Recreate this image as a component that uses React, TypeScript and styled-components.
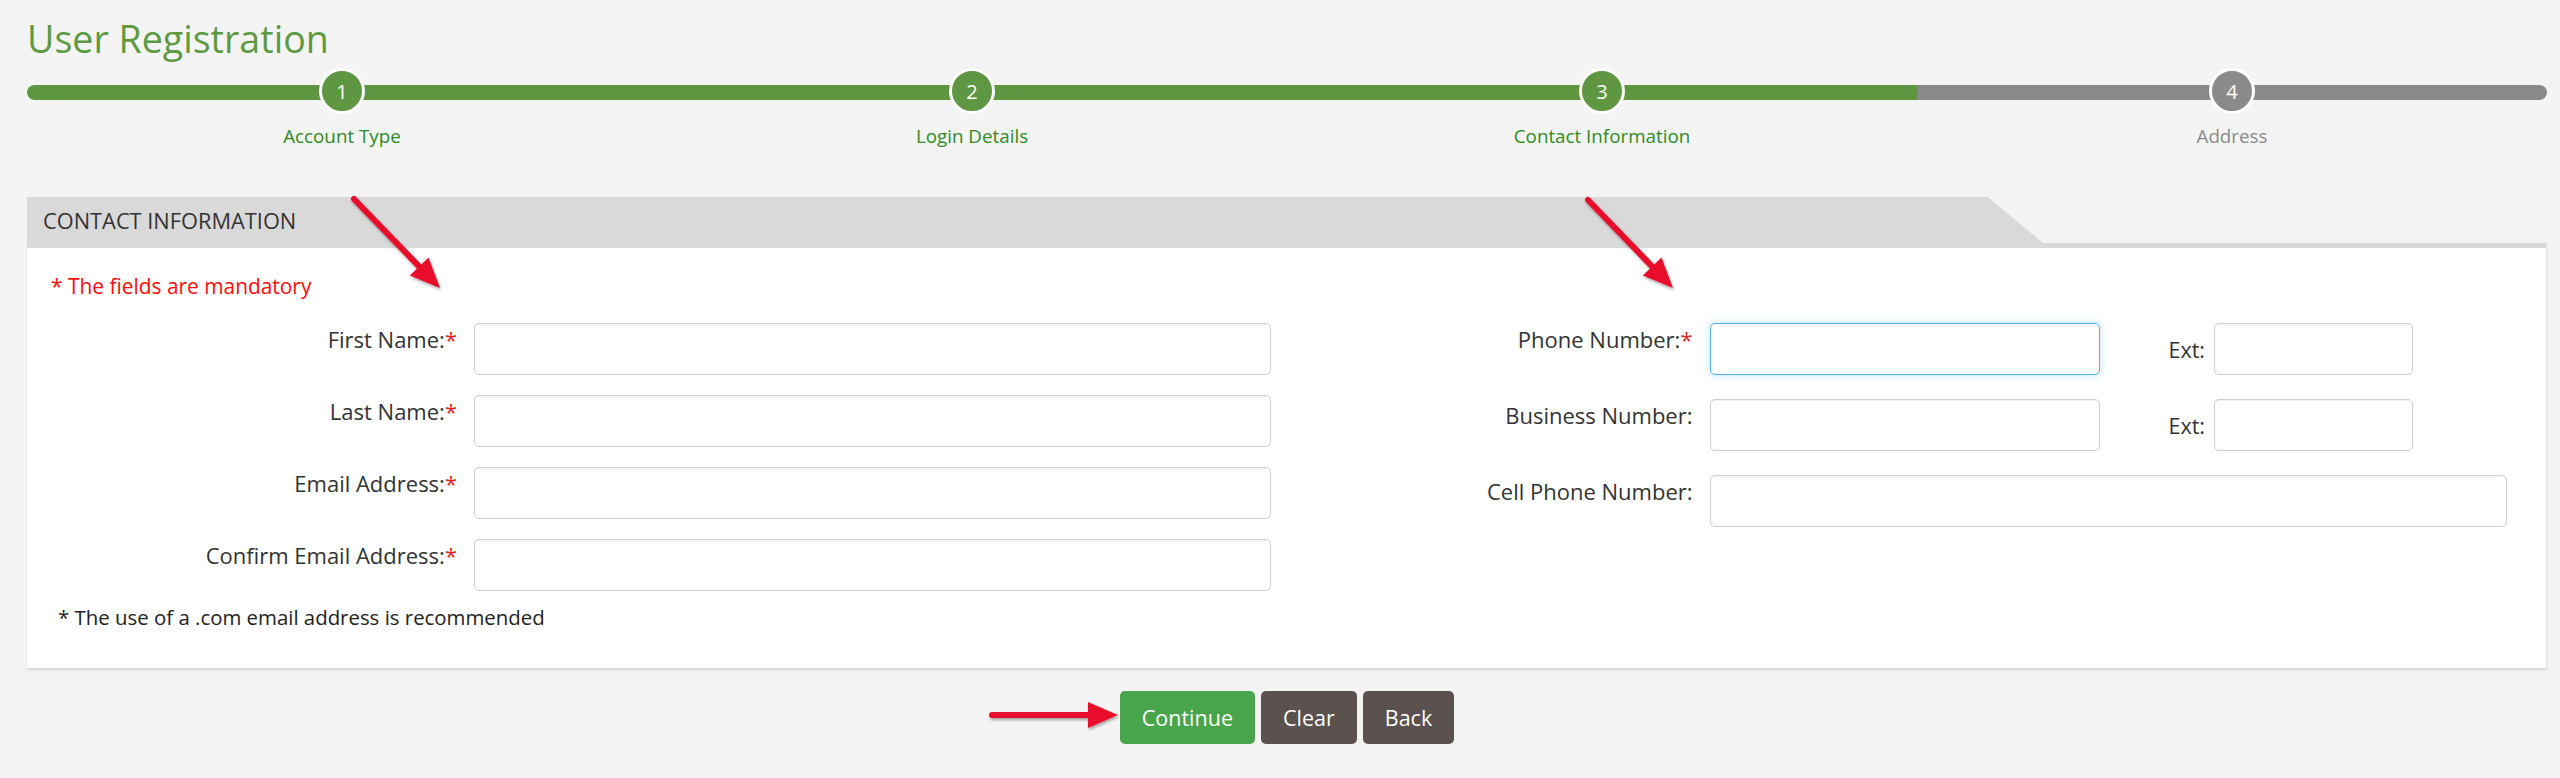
import styled, { createGlobalStyle } from 'styled-components';

const GlobalStyle = createGlobalStyle`
  body {
    margin: 0;
    background: #f4f4f4;
    font-family: 'Open Sans', 'Liberation Sans', sans-serif;
  }
`;

const steps = [
  { n: 1, label: 'Account Type', done: true },
  { n: 2, label: 'Login Details', done: true },
  { n: 3, label: 'Contact Information', done: true },
  { n: 4, label: 'Address', done: false },
];

type ArrowProps = { x1: number; y1: number; x2: number; y2: number };

const Arrow = ({ x1, y1, x2, y2 }: ArrowProps) => {
  const dx = x2 - x1;
  const dy = y2 - y1;
  const len = Math.hypot(dx, dy);
  const ux = dx / len;
  const uy = dy / len;
  const head = 30;
  const half = 13;
  const bx = x2 - ux * head;
  const by = y2 - uy * head;
  const pts = [
    `${x2},${y2}`,
    `${bx - uy * half},${by + ux * half}`,
    `${bx + uy * half},${by - ux * half}`,
  ].join(' ');
  return (
    <g>
      <line x1={x1} y1={y1} x2={bx + ux * 4} y2={by + uy * 4} stroke="#e8102c" strokeWidth="6" strokeLinecap="round" />
      <polygon points={pts} fill="#e8102c" />
    </g>
  );
};

export default function App() {
  return (
    <Page>
      <GlobalStyle />
      <Title>User Registration</Title>

      <Stepper>
        <Track>
          <Bar />
          <Circles>
            {steps.map((s) => (
              <Circle key={s.n} $done={s.done}>{s.n}</Circle>
            ))}
          </Circles>
        </Track>
        <Labels>
          {steps.map((s) => (
            <StepLabel key={s.n} $done={s.done}>{s.label}</StepLabel>
          ))}
        </Labels>
      </Stepper>

      <Panel>
        <Tab>CONTACT INFORMATION</Tab>
        <PanelBody>
          <Mandatory>* The fields are mandatory</Mandatory>
          <Columns>
            <Column $gap={20}>
              <Row>
                <Label>First Name:<Req>*</Req></Label>
                <Input $w={797} />
              </Row>
              <Row>
                <Label>Last Name:<Req>*</Req></Label>
                <Input $w={797} />
              </Row>
              <Row>
                <Label>Email Address:<Req>*</Req></Label>
                <Input $w={797} />
              </Row>
              <Row>
                <Label>Confirm Email Address:<Req>*</Req></Label>
                <Input $w={797} />
              </Row>
              <Note>* The use of a .com email address is recommended</Note>
            </Column>

            <Column $gap={24}>
              <Row>
                <Label>Phone Number:<Req>*</Req></Label>
                <Input $w={390} $focus />
                <ExtGroup>
                  <ExtLabel>Ext:</ExtLabel>
                  <Input $w={199} />
                </ExtGroup>
              </Row>
              <Row>
                <Label>Business Number:</Label>
                <Input $w={390} />
                <ExtGroup>
                  <ExtLabel>Ext:</ExtLabel>
                  <Input $w={199} />
                </ExtGroup>
              </Row>
              <Row>
                <Label>Cell Phone Number:</Label>
                <Input $w={797} />
              </Row>
            </Column>
          </Columns>
        </PanelBody>
      </Panel>

      <Actions>
        <Button $primary>Continue</Button>
        <Button>Clear</Button>
        <Button>Back</Button>
      </Actions>

      <Annotations width="2560" height="778" viewBox="0 0 2560 778">
        <defs>
          <filter id="shadow" x="-20%" y="-20%" width="140%" height="140%">
            <feDropShadow dx="1" dy="2" stdDeviation="1.5" floodColor="#000" floodOpacity="0.35" />
          </filter>
        </defs>
        <g filter="url(#shadow)">
          <Arrow x1={354} y1={199} x2={440} y2={288} />
          <Arrow x1={1588} y1={200} x2={1673} y2={288} />
          <Arrow x1={992} y1={715} x2={1118} y2={715} />
        </g>
      </Annotations>
    </Page>
  );
}

const Page = styled.div`
  position: relative;
  width: 2560px;
  min-height: 778px;
  box-sizing: border-box;
  padding: 0 13px 0 27px;
`;

const Title = styled.h1`
  margin: 0;
  padding-top: 13px;
  font-size: 37.6px;
  font-weight: 400;
  line-height: 52px;
  color: #5c9a43;
`;

const Stepper = styled.div`
  margin-top: 3px;
`;

const Track = styled.div`
  display: grid;
  align-items: center;
  height: 45px;

  & > * {
    grid-area: 1 / 1;
  }
`;

const Bar = styled.div`
  height: 15px;
  margin-top: 2px;
  border-radius: 8px;
  background: linear-gradient(to right, #5e9641 75%, #8a8a8a 75%);
`;

const Circles = styled.div`
  display: grid;
  grid-template-columns: repeat(4, 1fr);
  justify-items: center;
`;

const Circle = styled.div<{ $done: boolean }>`
  width: 46px;
  height: 46px;
  box-sizing: border-box;
  border: 3px solid #fff;
  border-radius: 50%;
  background: ${(p) => (p.$done ? '#5e9641' : '#8a8a8a')};
  color: #fff;
  font-size: 20px;
  display: flex;
  align-items: center;
  justify-content: center;
`;

const Labels = styled.div`
  display: grid;
  grid-template-columns: repeat(4, 1fr);
  margin-top: 11px;
`;

const StepLabel = styled.div<{ $done: boolean }>`
  text-align: center;
  font-size: 18.8px;
  line-height: 25px;
  color: ${(p) => (p.$done ? '#2f8a1f' : '#8a8a8a')};
`;

const Panel = styled.section`
  margin-top: 48px;
`;

const Tab = styled.div`
  width: 2016px;
  height: 46px;
  box-sizing: border-box;
  padding-left: 16px;
  line-height: 48px;
  font-size: 21.8px;
  color: #333;
  background: #d9d9d9;
  clip-path: polygon(0 0, calc(100% - 55px) 0, 100% 100%, 0 100%);
`;

const PanelBody = styled.div`
  background: #fff;
  border-top: 5px solid #d9d9d9;
  border-right: 1px solid #e2e2e2;
  box-shadow: 0 2px 2px rgba(0, 0, 0, 0.12);
  padding: 25px 24px 37px;
`;

const Mandatory = styled.p`
  margin: 0 0 23px;
  font-size: 20.9px;
  line-height: 27px;
  color: #ff0d0d;
`;

const Columns = styled.div`
  display: grid;
  grid-template-columns: 1fr 1fr;
  align-items: start;
`;

const Column = styled.div<{ $gap: number }>`
  display: flex;
  flex-direction: column;
  gap: ${(p) => p.$gap}px;
`;

const Row = styled.div`
  display: flex;
  align-items: flex-start;
  gap: 17px;
`;

const Label = styled.label`
  flex: none;
  width: 406px;
  padding-top: 2px;
  text-align: right;
  font-size: 22px;
  line-height: 28px;
  color: #333;
`;

const Req = styled.span`
  color: #e02424;
`;

const Input = styled.input<{ $w: number; $focus?: boolean }>`
  flex: none;
  width: ${(p) => p.$w}px;
  height: 52px;
  box-sizing: border-box;
  border: 1px solid ${(p) => (p.$focus ? '#4db3f5' : '#cfcfcf')};
  border-radius: 5px;
  background: #fff;
  box-shadow: ${(p) =>
    p.$focus
      ? '0 0 8px rgba(77, 179, 245, 0.35)'
      : 'inset 0 1px 1px rgba(0, 0, 0, 0.06)'};
  font-size: 20px;
  outline: none;
`;

const ExtGroup = styled.div`
  display: flex;
  align-items: center;
  gap: 9px;
  margin-left: 52px;
  align-self: stretch;
`;

const ExtLabel = styled.span`
  font-size: 21.5px;
  color: #333;
`;

const Note = styled.p`
  margin: -7px 0 0;
  padding-left: 7px;
  font-size: 20.4px;
  line-height: 27px;
  color: #222;
`;

const Actions = styled.div`
  display: flex;
  justify-content: center;
  gap: 6px;
  margin-top: 23px;
`;

const Button = styled.button<{ $primary?: boolean }>`
  height: 53px;
  padding: 0 22px;
  border: none;
  border-radius: 5px;
  background: ${(p) => (p.$primary ? '#49a54b' : '#5b514f')};
  color: #fff;
  font-family: 'Open Sans', 'Liberation Sans', sans-serif;
  font-size: 21.5px;
  cursor: pointer;
`;

const Annotations = styled.svg`
  position: absolute;
  left: 0;
  top: 0;
  pointer-events: none;
`;
